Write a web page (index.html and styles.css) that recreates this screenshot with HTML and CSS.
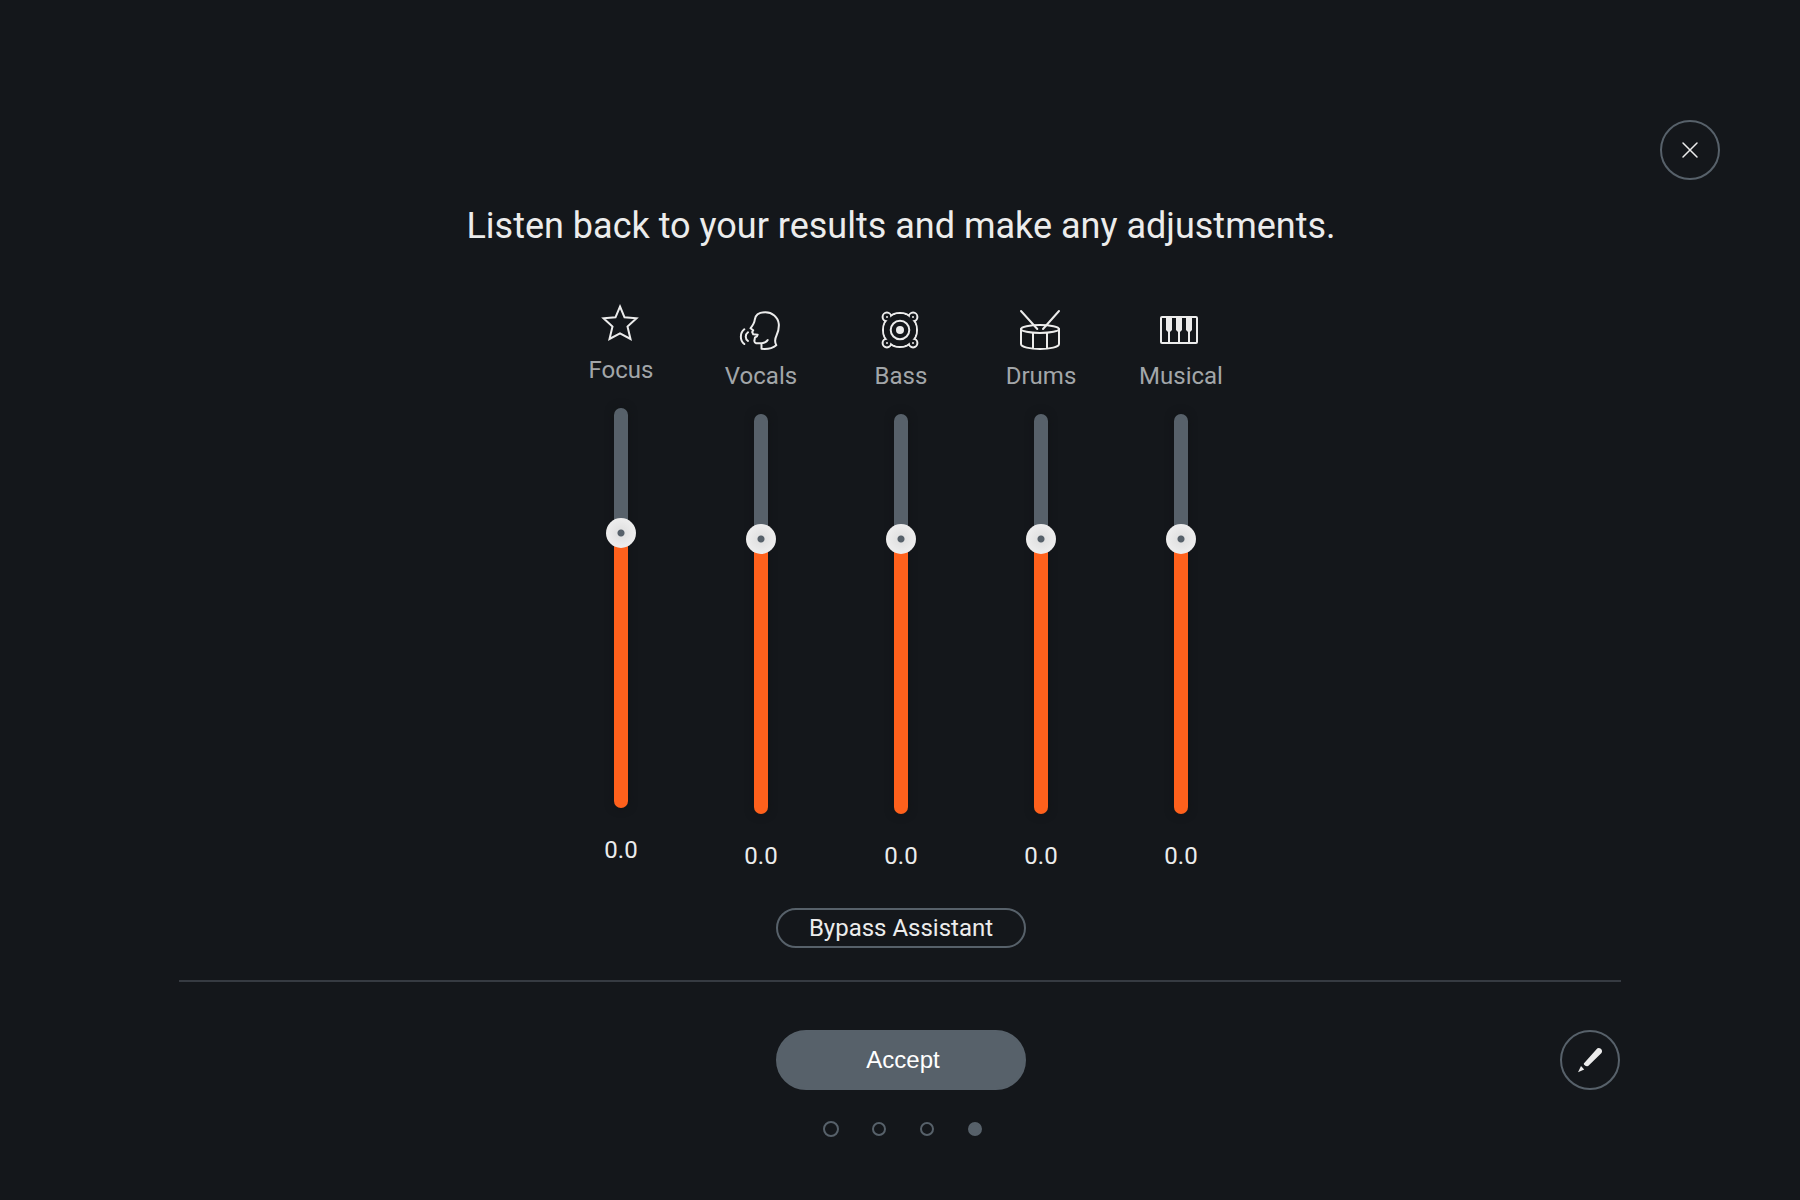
FILE: index.html
```html
<!DOCTYPE html>
<html lang="en">
<head>
<meta charset="utf-8">
<meta name="viewport" content="width=device-width, initial-scale=1">
<title>Assistant results</title>
<link rel="stylesheet" href="styles.css">
</head>
<body>
<header class="topbar">
  <button class="round-button" type="button" aria-label="Close">
    <svg class="round-icon" viewBox="2 2 56 56" aria-hidden="true"><path class="thin" d="M23 23 37 37M37 23 23 37"/></svg>
  </button>
</header>
<main class="panel">
  <h1 class="title">Listen back to your results and make any adjustments.</h1>
  <section class="channels" aria-label="Adjustments">
    <div class="channel channel-lead">
      <svg class="icon" viewBox="0 0 44 44" aria-hidden="true"><path d="M21 4.500 25.500 15.300 37.500 16.300 28.500 24.500 31.500 37 21 31.300 10.500 37 13.500 24.500 4.500 16.300 16.500 15.300Z" stroke-linejoin="miter"/></svg>
      <label class="name" for="focus">Focus</label>
      <input class="slider" id="focus" type="range" min="-7.1" max="3" step="0.1" value="0">
      <output class="value" for="focus">0.0</output>
    </div>
    <div class="channel">
      <svg class="icon" viewBox="0 0 44 44" aria-hidden="true"><path d="M22.500 35.300V40.800C28 41.400 33.500 40.300 37.300 37.200 35.500 34 36 30.500 37.500 27.500 39.500 23.500 40 19 39.800 16 39 9 33 4.300 26.500 4.300 20.500 4.300 16.500 7 15.800 11.500 15.500 15 14.500 16.500 11.500 20.300L14.200 22.200 13.200 24 14.200 26.300 18.700 26.700C18.500 28.500 17.500 29 16 29.500L15.300 33C15.500 35.500 17.500 35.500 22.500 35.300 25.500 35 27.500 34 28.700 32M9 24.300C6 26.500 6 30.800 9 33M5.300 21.300C.7 25 .7 32.300 5.300 36"/></svg>
      <label class="name" for="vocals">Vocals</label>
      <input class="slider" id="vocals" type="range" min="-7.1" max="3" step="0.1" value="0">
      <output class="value" for="vocals">0.0</output>
    </div>
    <div class="channel">
      <svg class="icon" viewBox="0 0 44 44" aria-hidden="true"><circle cx="21" cy="22" r="17"/><g class="ear"><circle cx="7.900" cy="8.900" r="4.300"/><circle cx="34.100" cy="8.900" r="4.300"/><circle cx="7.900" cy="35.100" r="4.300"/><circle cx="34.100" cy="35.100" r="4.300"/><circle cx="21" cy="22" r="16" stroke="none"/></g><circle cx="21" cy="22" r="9.300"/><g class="solid"><circle cx="21" cy="22" r="4"/><circle cx="8" cy="9" r="1"/><circle cx="34" cy="9" r="1"/><circle cx="8" cy="35" r="1"/><circle cx="34" cy="35" r="1"/></g></svg>
      <label class="name" for="bass">Bass</label>
      <input class="slider" id="bass" type="range" min="-7.1" max="3" step="0.1" value="0">
      <output class="value" for="bass">0.0</output>
    </div>
    <div class="channel">
      <svg class="icon" viewBox="0 0 44 44" aria-hidden="true"><ellipse cx="21" cy="21" rx="19" ry="4"/><path d="M2 21V36C2 39 11 41 21 41S40 39 40 36V21M14 25V40M28 25V40M2 3 18.300 21M40 3 24 21"/></svg>
      <label class="name" for="drums">Drums</label>
      <input class="slider" id="drums" type="range" min="-7.1" max="3" step="0.1" value="0">
      <output class="value" for="drums">0.0</output>
    </div>
    <div class="channel">
      <svg class="icon" viewBox="0 0 44 44" aria-hidden="true"><rect x="2" y="9" width="36" height="26" rx="1"/><path d="M10 23V35M20 23V35M30 23V35"/><path class="solid" d="M7 9H13V22L11 24H9L7 22ZM17 9H23V22L21 24H19L17 22ZM27 9H33V22L31 24H29L27 22Z"/></svg>
      <label class="name" for="musical">Musical</label>
      <input class="slider" id="musical" type="range" min="-7.1" max="3" step="0.1" value="0">
      <output class="value" for="musical">0.0</output>
    </div>
  </section>
  <button class="bypass" type="button">Bypass Assistant</button>
</main>
<footer class="footer">
  <button class="accept" type="button">Accept</button>
  <button class="round-button edit" type="button" aria-label="Edit">
    <svg class="round-icon" viewBox="2 2 56 56" aria-hidden="true"><path class="solid" d="M23.800 33.500 36.300 19.500Q38 17.300 40.500 18.500 43 20.500 41.500 23L28.200 36Q26 36.500 24.700 35.200 23.600 34.500 23.800 33.500ZM21 36 24.200 39.500 18 42.300Z"/></svg>
  </button>
  <ol class="steps" aria-label="Step 4 of 4">
    <li class="step"><span class="dot dot-first"></span></li>
    <li class="step"><span class="dot"></span></li>
    <li class="step"><span class="dot"></span></li>
    <li class="step" aria-current="step"><span class="dot dot-current"></span></li>
  </ol>
</footer>
</body>
</html>
```
FILE: styles.css
```css
:root {
  --bg: #14171b;
  --line: #57616a;
  --rule: #363b42;
  --text: #ececec;
  --muted: #a2a6a9;
  --accent: #ff611c;
}

* { box-sizing: border-box; }

body {
  margin: 0;
  min-height: 100vh;
  background: var(--bg);
  color: var(--text);
  font-family: Roboto, "Liberation Sans", sans-serif;
  font-size: 24px;
  line-height: 28px;
}

button {
  padding: 0;
  border: 2px solid var(--line);
  background: transparent;
  color: inherit;
  font: inherit;
  cursor: pointer;
}

.topbar {
  display: flex;
  justify-content: flex-end;
  padding: 120px 80px 0;
}

.round-button {
  display: grid;
  place-items: center;
  width: 60px;
  height: 60px;
  border-radius: 50%;
}

.round-icon {
  width: 56px;
  height: 56px;
  fill: none;
  stroke: var(--text);
  stroke-linecap: round;
}

.thin { stroke-width: 1.5; }

.solid {
  fill: var(--text);
  stroke: none;
}

.panel {
  display: flex;
  flex-direction: column;
  align-items: center;
  margin: 0 calc(10% - 1px);
  padding: 22px 0 32px 2px;
  border-bottom: 2px solid var(--rule);
}

.title {
  margin: 0 0 52px;
  font-size: 36px;
  font-weight: 400;
  line-height: 48px;
  text-align: center;
}

.channels {
  display: flex;
  align-items: flex-end;
  margin-bottom: 38px;
}

.channel {
  display: flex;
  flex-direction: column;
  align-items: center;
  width: 140px;
}

.channel-lead { padding-bottom: 6px; }

.icon {
  width: 44px;
  height: 44px;
  margin-bottom: 10px;
  fill: none;
  stroke: var(--text);
  stroke-width: 2;
  stroke-linecap: round;
  stroke-linejoin: round;
}

.ear { fill: var(--bg); }

.name {
  margin-bottom: 24px;
  color: var(--muted);
}

.slider {
  appearance: none;
  writing-mode: vertical-lr;
  direction: rtl;
  width: 30px;
  height: 400px;
  margin: 0 0 28px;
  background: transparent;
}

.slider::-webkit-slider-runnable-track {
  width: 14px;
  height: 400px;
  border-radius: 7px;
  background: linear-gradient(to top, var(--accent) 69%, var(--line) 69%);
  box-shadow: 0 0 8px #121416;
}

.slider::-webkit-slider-thumb {
  appearance: none;
  width: 30px;
  height: 30px;
  margin-left: -8px;
  border-radius: 50%;
  background: radial-gradient(circle, var(--line) 3px, #e2e2e2 4px, #ececec 13px);
}

.bypass {
  width: 250px;
  height: 40px;
  border-radius: 20px;
}

.footer {
  display: grid;
  grid-template-columns: 1fr 250px 1fr;
  row-gap: 31px;
  margin: 0 10%;
  padding: 48px 0 48px 2px;
}

.accept {
  grid-column: 2;
  height: 60px;
  padding-left: 4px;
  border-radius: 30px;
  background: var(--line);
  color: #fff;
  font-family: "Liberation Sans", Arial, sans-serif;
}

.edit { justify-self: end; }

.steps {
  grid-column: 2;
  display: flex;
  justify-content: center;
  margin: 0;
  padding: 0 0 0 4px;
  list-style: none;
}

.step {
  display: grid;
  place-items: center;
  width: 48px;
  height: 16px;
}

.dot {
  width: 14px;
  height: 14px;
  border: 2px solid var(--line);
  border-radius: 50%;
}

.dot-first {
  width: 16px;
  height: 16px;
}

.dot-current { background: var(--line); }
```
